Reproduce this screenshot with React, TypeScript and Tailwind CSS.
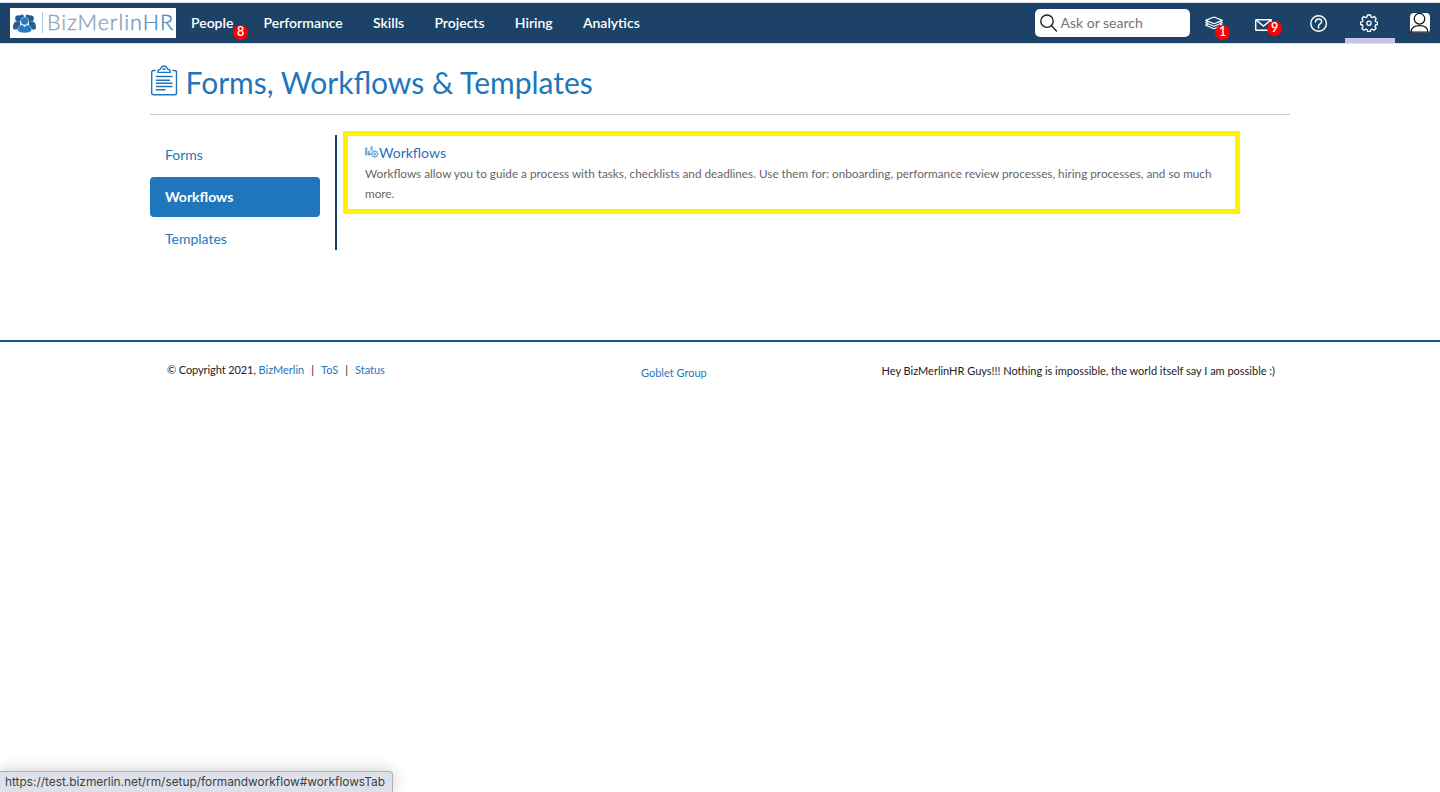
import React from "react";

const navItems = ["Performance", "Skills", "Projects", "Hiring", "Analytics"];

function Badge({ children, className }: { children: React.ReactNode; className: string }) {
  return (
    <span className={`absolute flex h-[15px] w-[15px] items-center justify-center rounded-full bg-[#ff0000] pb-px text-[12.5px] font-semibold leading-none text-white ${className}`}>
      {children}
    </span>
  );
}

function Logo() {
  return (
    <a className="ml-[10px] flex h-[30px] w-[166px] items-center bg-white">
      <svg width="166" height="30" viewBox="0 0 166 30">
        <defs>
          <linearGradient id="word" x1="0" x2="1">
            <stop offset="0" stopColor="#93a6bb" />
            <stop offset="0.6" stopColor="#7f9dbb" />
            <stop offset="1" stopColor="#4787bb" />
          </linearGradient>
        </defs>
        <g fill="#245d92">
          <circle cx="8.5" cy="10.5" r="3.3" />
          <circle cx="20.5" cy="10.5" r="3.3" />
          <path d="M3 20c0-4 1-6.500 4-6.500h3v8H6c-2 0-3-.5-3-1.500zM26 20c0-4-1-6.500-4-6.500h-3v8h4c2 0 3-.5 3-1.500z" />
          <circle cx="12" cy="8.500" r="2" />
          <circle cx="17.500" cy="8.500" r="2" />
        </g>
        <circle cx="14.600" cy="13" r="4" fill="#2579bd" stroke="#fff" strokeWidth=".4" />
        <path d="M7.800 23c0-4 2-6.200 4.500-6.200l2.300 2 2.300-2c2.600 0 4.600 2.200 4.600 6.200-3 2.500-10.500 2.500-13.700 0z" fill="#2579bd" stroke="#fff" strokeWidth=".4" />
        <path d="M32.500 4v21" stroke="#a9c4dc" />
        <text x="37" y="22" textLength="126" lengthAdjust="spacing" fill="url(#word)" stroke="url(#word)" strokeWidth=".4" className="font-['Lato',sans-serif] text-[21.500px] font-light">BizMerlinHR</text>
      </svg>
    </a>
  );
}

function ClipboardIcon() {
  return (
    <svg width="28" height="32" viewBox="0 0 28 32" fill="none" stroke="#1f76bd" strokeWidth="1.400" strokeLinecap="round">
      <path d="M5 5.500H3.500Q1.700 5.500 1.700 7.300V28Q1.700 29.800 3.500 29.800H24.700Q26.500 29.800 26.500 28V7.300Q26.500 5.500 24.700 5.500H23" />
      <path d="M8 7.400V5.900Q8 4.500 9.700 4.500Q10.500 4.500 11 3Q11.800 1 14 1T17 3Q17.500 4.500 18.500 4.500Q20.200 4.500 20.200 5.900V7.400Z" />
      <path d="M13 4.300Q14 2.900 15 4.300M6.400 11.500H22M6.400 15.200H19.500M6.400 18.300H22M6.400 21.500H22M6.400 24.700H15" />
    </svg>
  );
}

function WorkflowIcon() {
  return (
    <svg width="14" height="14" viewBox="0 0 14 14" fill="none" stroke="#1f76bd" strokeWidth=".7">
      <path d="M.6 2h1.300v7H.6zM3.300 5.500h1.300v3.500H3.300zM5.500 9V7.500M6 5V1.200Q6 .5 6.600 .5T7.200 1.200V4.500" />
      <circle cx="9.700" cy="8" r="2.800" />
      <circle cx="9.700" cy="8" r="1" />
      <path d="M9.700 4.200v1M9.700 10.700v1.200M5.900 8h1M12.500 8h1.200M7 5.300l.8.800M11.700 10l.8.800M12.500 5.300l-.8.800M7 10.700l.8-.8" />
    </svg>
  );
}

function GearIcon() {
  return (
    <svg className="mr-[3px]" width="18" height="18" viewBox="0 0 18 18" fill="none" stroke="#fff" strokeWidth="1.300" strokeLinejoin="round">
      <path d="M7.500 1h3l.5 2 1.300.6 2-1.100 1.900 2.100-1.100 1.900.5 1.200 1.800.5v2.300l-1.900.5-.5 1.300 1.100 1.900-2 2-1.900-1.100-1.300.5-.5 1.900H7.600l-.5-1.900-1.300-.5-2 1.100-1.900-2 1.100-2-.5-1.200-1.900-.5V8.200l1.900-.5.5-1.200-1.100-2 2-2 1.900 1.100L7 3z" />
      <circle cx="9" cy="9.200" r="2.100" />
    </svg>
  );
}

function Header() {
  return (
    <header className="mt-[2px] flex h-[42px] items-center border-y border-[#dbe0ea] bg-[#1c4268]">
      <Logo />
      <nav className="ml-[15px] flex gap-[30.2px] text-[14px] font-semibold leading-5 text-white">
        <span className="relative">
          People
          <Badge className="left-[42px] top-[12px]">8</Badge>
        </span>
        {navItems.map((item) => <span key={item}>{item}</span>)}
      </nav>
      <div className="ml-auto flex h-7 w-[155px] items-center rounded-[5px] bg-white pl-[5px]">
        <svg width="18" height="19" viewBox="0 0 18 19" fill="none" stroke="#222" strokeWidth="1.400" strokeLinecap="round">
          <circle cx="7" cy="7.200" r="6.200" />
          <path d="M11.500 11.800l5 5.200" />
        </svg>
        <span className="mb-[2px] ml-[2.5px] text-[14px] text-[#757575]">Ask or search</span>
      </div>
      <div className="relative ml-[15px] h-[16px] w-[18px]">
        <svg className="mt-px" width="18" height="16" viewBox="0 0 18 16" fill="none" stroke="#fff" strokeWidth="1.200" strokeLinejoin="round">
          <path d="M9 1l8.300 3.400L9 7.800.7 4.400zM2.800 5.500L.7 6.800 9 10.200l8.300-3.400-2.100-1.300M2.800 8L.7 9.300 9 12.700l8.300-3.400L15.200 8" />
        </svg>
        <Badge className="left-[10px] top-[10px]">1</Badge>
      </div>
      <div className="relative ml-[32px] mt-[4px] h-[12px] w-[17px]">
        <svg width="17" height="12" viewBox="0 0 17 12" fill="none" stroke="#fff" strokeWidth="1.400">
          <rect x=".7" y=".7" width="15.600" height="10.500" rx=".8" />
          <path d="M1 1l7.500 6L16 1" />
        </svg>
        <Badge className="left-[12px] top-[2px]">9</Badge>
      </div>
      <svg className="ml-[38px]" width="18" height="18" viewBox="0 0 18 18" fill="none" stroke="#fff" strokeWidth="1.400" strokeLinecap="round">
        <circle cx="8.600" cy="9.500" r="7.800" />
        <path d="M5.500 8Q5.500 5 8.600 5T11.600 7.600Q11.600 9.200 10.100 9.900T8.600 11.800V14" />
      </svg>
      <div className="relative ml-[17px] flex h-full w-[50px] items-center justify-center">
        <GearIcon />
        <span className="absolute bottom-0 left-0 h-[5px] w-[50px] bg-[#c8c4e8]" />
      </div>
      <svg className="ml-[14px] mr-[10px]" width="21" height="20" viewBox="0 0 21 20" fill="none">
        <rect x="1" width="20" height="20" rx="4" fill="#fff" />
        <g stroke="#111" strokeWidth="1.200">
          <circle cx="10.500" cy="5.800" r="5.300" />
          <path d="M2 19.200Q2.500 12.700 10.500 12.700T19 19.200z" />
        </g>
      </svg>
    </header>
  );
}

export default function App() {
  return (
    <div className="flex h-[792px] flex-col overflow-hidden bg-white font-['Lato',sans-serif] text-[14px] text-[#222]">
      <Header />
      <main className="mx-auto h-[296px] w-[1140px]">
        <div className="flex h-[71px] border-b border-[#c8c8c8] pt-[21px]">
          <ClipboardIcon />
          <h1 className="-mt-px ml-[7.5px] text-[30px] leading-[36px] text-[#1f76bd]">Forms, Workflows &amp; Templates</h1>
        </div>
        <div className="flex pt-4">
          <aside className="mt-1 flex h-[115px] w-[187px] flex-col border-r-2 border-[#1c4268] text-[#1f76bd]">
            <a className="flex h-10 shrink-0 items-center pb-[2px] pl-[15px]">Forms</a>
            <a className="mt-0.5 flex h-10 w-[170px] shrink-0 items-center rounded bg-[#1f76bd] pb-[2px] pl-[15px] font-bold text-white">Workflows</a>
            <a className="mt-0.5 flex h-10 shrink-0 items-center pb-[2px] pl-[15px]">Templates</a>
          </aside>
          <section className="ml-[6px] h-[83px] w-[897px] border-[5px] border-[#fff200] pl-[17px] pt-[7px]">
            <h2 className="flex h-5 text-[14px] leading-5 text-[#1f76bd]">
              <span className="mt-[3px]"><WorkflowIcon /></span>Workflows
            </h2>
            <p className="mt-px whitespace-nowrap text-[11.75px] leading-5 text-[#666]">Workflows allow you to guide a process with tasks, checklists and deadlines. Use them for: onboarding, performance review processes, hiring processes, and so much<br />more.</p>
          </section>
        </div>
      </main>
      <footer className="flex h-[60px] border-t-2 border-[#17578c] text-[11px] leading-4">
        <div className="ml-[167px] mt-5 w-[474px] whitespace-pre"><span className="tracking-[-0.09px]">© Copyright 2021, </span><a className="text-[#1f76bd]">BizMerlin</a><span className="px-[7px]">|</span><a className="text-[#1f76bd]">ToS</a><span className="px-[7px]">|</span><a className="text-[#1f76bd]">Status</a></div>
        <a className="mt-[23px] text-[#1f76bd]">Goblet Group</a>
        <p className="ml-auto mr-[165px] mt-[21px] tracking-[-0.01px]">Hey BizMerlinHR Guys!!! Nothing is impossible, the world itself say I am possible :)</p>
      </footer>
      <div className="mt-auto flex h-[21px] w-[393px] items-center rounded-tr-[4px] border-r border-t border-[#b0b0b3] bg-[#dee1e9] pl-[5px] pt-[2px] font-['Inter',sans-serif] text-[11.86px] text-[#3c4043] shadow-[0_0_16px_rgba(0,0,0,0.22)]">
        https://test.bizmerlin.net/rm/setup/formandworkflow#workflowsTab
      </div>
    </div>
  );
}
